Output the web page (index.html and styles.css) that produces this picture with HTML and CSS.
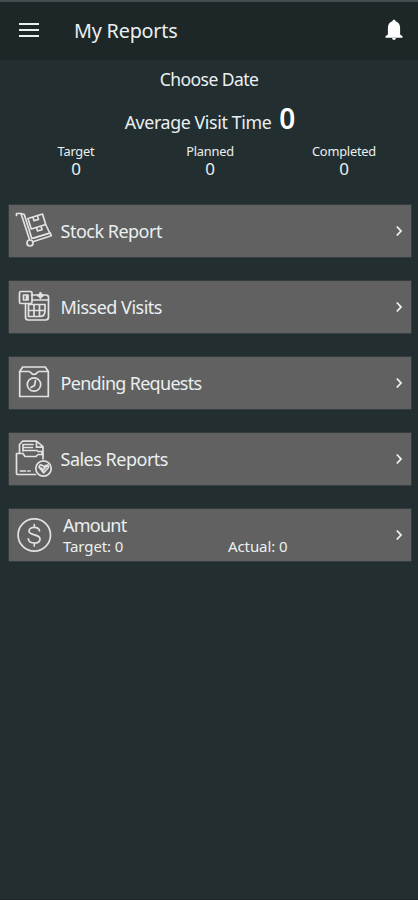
FILE: index.html
```html
<!DOCTYPE html>
<html lang="en">
<head>
<meta charset="utf-8">
<title>My Reports</title>
<link rel="stylesheet" href="styles.css">
</head>
<body>
<div class="screen">
  <header class="topbar">
    <svg class="menu" viewBox="0 0 20 16"><path d="M0 2h20M0 8h20M0 14h20"/></svg>
    <h1><span>My Reports</span></h1>
    <svg class="bell" viewBox="0 0 18 22"><path d="M9 .8c-1 0-1.500.6-1.600 1.500C4.200 3.200 2.900 5.700 2.900 9v6.500L.5 17.300v1.500h17v-1.500l-2.400-1.800V9c0-3.300-1.300-5.800-4.500-6.700C10.500 1.400 10 .8 9 .8zM7 19c.2 1.300 1 2 2 2s1.800-.7 2-2z"/></svg>
  </header>
  <main>
    <div class="choose"><span>Choose Date</span></div>
    <div class="average"><span class="average-label">Average Visit Time</span><strong>0</strong></div>
    <div class="stats">
      <div class="stat"><span class="stat-name">Target</span><b>0</b></div>
      <div class="stat"><span class="stat-name">Planned</span><b>0</b></div>
      <div class="stat"><span class="stat-name">Completed</span><b>0</b></div>
    </div>
    <nav class="reports">
      <a class="report">
        <svg class="icon" viewBox="0 0 40 40"><path d="M2.500 4.500v-2h4.500l8.500 26"/><path d="M7 2.500l3.300 1 7.500 24 18.500-5.500 1 2.700-18.500 6"/><circle cx="16" cy="32" r="3"/><path d="M14 7.500L28.500 3l3.200 10.500-14.500 4.500zM17.500 18l14.200-4.500 4 8.500-15.500 5M19 6l1 3.800 4.500-1.400-1-3.600M22.500 16.500l1 3.500 4.500-1.400-1-3.500"/></svg>
        <span class="label">Stock Report</span>
        <svg class="chevron" viewBox="0 0 8 12"><path d="M1.800 1.500L6 6l-4.200 4.500"/></svg>
      </a>
      <a class="report">
        <svg class="icon" viewBox="0 0 40 40"><path d="M17.500 8h14.500q2.500 0 2.500 2.500v19.500q0 3-3 3H14q-2.500 0-2.500-3V16.500"/><rect x="5.500" y="4.500" width="12.500" height="12" rx="1.500"/><path d="M9.500 8h4.500v5H9.500zM12.500 8v5M18.500 13h16M14.500 18v11.500h11.500M14.500 23.500h16.500V17.500H14.500M20 17.500v12M25.500 17.500v12M31 23.500c0 4-1 6-5 6"/><path d="M24.500 8.500h4M26.500 6.500v4" stroke-width="2.800"/></svg>
        <span class="label">Missed Visits</span>
        <svg class="chevron" viewBox="0 0 8 12"><path d="M1.800 1.500L6 6l-4.200 4.500"/></svg>
      </a>
      <a class="report">
        <svg class="icon" viewBox="0 0 40 40"><path d="M5.700 8.500v25h28.600v-25l-3-4.500H8.700zM5.700 8.500h9.300c1.800 0 2.500 3 5 3s3.200-3 5-3h9.300"/><circle cx="20" cy="21.500" r="6.700"/><path d="M21.500 17.500l-1 5-3.500 2"/></svg>
        <span class="label label-tight">Pending Requests</span>
        <svg class="chevron" viewBox="0 0 8 12"><path d="M1.800 1.500L6 6l-4.200 4.500"/></svg>
      </a>
      <a class="report">
        <svg class="icon" viewBox="0 0 40 40"><path d="M5.500 14V5.500L8.500 2.200h14l6.500 5.500v12M22.500 2.200v6H29M9 12V5.500h10M10.500 8.500h8M10.500 11.500h12.500M24 12.500h4v3"/><path d="M21.500 35.500H3.500q-1 0-1-1.500V14.500H9l2 3h11l2-2h5"/><path d="M6.500 32h5M14 32h2"/><circle cx="29.500" cy="29.500" r="7.700"/><path d="M25 28l1.200-2.200 2.500.7 1.300 1.500 1.500-1.500 2.500-.5.500 2.500-5 5.300zM27 29l2.200 2 4.500-5"/></svg>
        <span class="label">Sales Reports</span>
        <svg class="chevron" viewBox="0 0 8 12"><path d="M1.800 1.500L6 6l-4.200 4.500"/></svg>
      </a>
      <a class="report">
        <svg class="icon" viewBox="0 0 40 40"><circle cx="20.300" cy="20" r="16.200"/><path d="M25.500 15.800c-.5-2.300-2.500-3.500-5.200-3.500-3.100 0-5.300 1.500-5.300 3.800 0 5 11 2.500 11 7.800 0 2.500-2.300 4.100-5.700 4.100-3.300 0-5.500-1.600-6-4.200M20.300 9.500v3M20.300 28v3"/></svg>
        <div class="amount">
          <span class="amount-title">Amount</span>
          <div class="figures"><span>Target: 0</span><span>Actual: 0</span></div>
        </div>
        <svg class="chevron" viewBox="0 0 8 12"><path d="M1.800 1.500L6 6l-4.200 4.500"/></svg>
      </a>
    </nav>
  </main>
</div>
</body>
</html>
```
FILE: styles.css
```css
* { box-sizing: border-box; }
body {
  margin: 0;
  background: #232e30;
  color: #eaf0f0;
  font-family: "Noto Sans", sans-serif;
}
.screen {
  height: 900px;
  border-top: 2px solid #424b4d;
  border-bottom: 1px solid #1b2325;
  overflow: hidden;
}
.topbar {
  display: flex;
  align-items: center;
  height: 58px;
  padding: 0 15px 0 19px;
  background: #1e2728;
}
.menu { width: 20px; height: 16px; margin-top: -3px; fill: none; stroke: #e9f0f1; stroke-width: 2; }
h1 { flex: 1; margin: 0 0 0 35px; font-size: 19.800px; font-weight: 400; line-height: 26px; letter-spacing: -.2px; }
.bell { width: 18px; height: 22px; margin-top: -3px; fill: #fff; }
.choose { padding-top: 7px; text-align: center; font-size: 17.500px; line-height: 24px; letter-spacing: -.55px; }
.average {
  display: flex;
  justify-content: center;
  align-items: baseline;
  gap: 8px;
  height: 38px;
  margin-top: 8px;
  padding-left: 2px;
  font-size: 17.800px;
  line-height: 38px;
}
.average-label { letter-spacing: -.38px; }
.average strong { font-size: 28px; font-weight: 600; color: #fff; }
.stats { display: grid; grid-template-columns: repeat(3, 134px); padding-left: 9px; margin-top: 6px; }
.stat { display: flex; flex-direction: column; align-items: center; font-size: 12.800px; line-height: 17px; }
.stat-name { letter-spacing: -.2px; }
.stat b { font-size: 17px; font-weight: 400; line-height: 18px; }
.reports { display: grid; gap: 24.100px; padding: 27px 7px 0 9px; }
.report {
  display: flex;
  align-items: center;
  height: 52px;
  padding-right: 8px;
  padding-left: 5px;
  background: #616161;
  box-shadow: 0 0 1px #8a9090;
}
.icon { flex: none; width: 40px; height: 40px; fill: none; stroke: #e2e2e2; stroke-width: 1.700; stroke-linejoin: round; stroke-linecap: round; }
.label { flex: 1; margin-left: 6.500px; font-size: 18px; line-height: 24px; letter-spacing: -.5px; }
.label-tight { letter-spacing: -.7px; }
.chevron { flex: none; width: 8px; height: 12px; fill: none; stroke: #f2f2f2; stroke-width: 1.800; }
.amount { flex: 1; margin: -1px 0 0 9px; }
.amount-title { display: block; font-size: 18px; line-height: 22px; letter-spacing: -.75px; }
.figures { display: grid; grid-template-columns: 165px 1fr; font-size: 15px; line-height: 20px; letter-spacing: -.1px; }
```
